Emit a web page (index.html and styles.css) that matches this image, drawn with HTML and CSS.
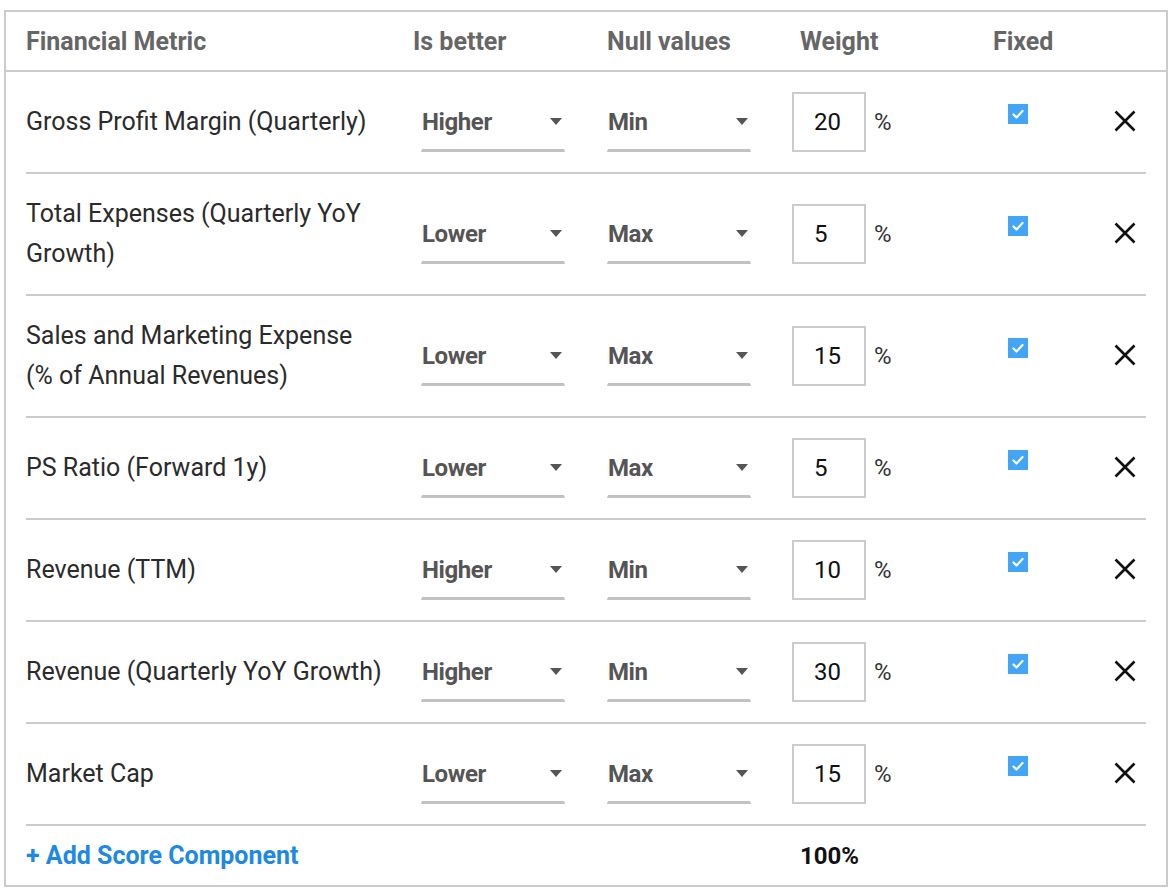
FILE: index.html
```html
<!DOCTYPE html>
<html lang="en">
<head>
<meta charset="utf-8">
<title>Score Components</title>
<link rel="stylesheet" href="styles.css">
</head>
<body>
<div class="panel">
  <div class="head">
    <div>Financial Metric</div>
    <div>Is better</div>
    <div>Null values</div>
    <div>Weight</div>
    <div>Fixed</div>
  </div>

  <div class="row">
    <div class="metric">Gross Profit Margin (Quarterly)</div>
    <div><div class="select"><span>Higher</span><span class="caret"></span></div></div>
    <div><div class="select"><span>Min</span><span class="caret"></span></div></div>
    <div class="weight"><div class="input">20</div><span class="pct">%</span></div>
    <div class="fixed"><span class="check"><svg viewBox="0 0 20 20" width="20" height="20"><path d="M5.5 10.5 L8.5 13.5 L14.5 7" fill="none" stroke="#fff" stroke-width="2.2" stroke-linecap="round" stroke-linejoin="round"/></svg></span></div>
    <div class="remove"><svg viewBox="0 0 22 22" width="22" height="22"><path d="M1.5 1.5 L20.5 20.5 M20.5 1.5 L1.5 20.5" stroke="#111" stroke-width="2.6"/></svg></div>
  </div>

  <div class="row">
    <div class="metric">Total Expenses (Quarterly YoY Growth)</div>
    <div><div class="select"><span>Lower</span><span class="caret"></span></div></div>
    <div><div class="select"><span>Max</span><span class="caret"></span></div></div>
    <div class="weight"><div class="input">5</div><span class="pct">%</span></div>
    <div class="fixed"><span class="check"><svg viewBox="0 0 20 20" width="20" height="20"><path d="M5.5 10.5 L8.5 13.5 L14.5 7" fill="none" stroke="#fff" stroke-width="2.2" stroke-linecap="round" stroke-linejoin="round"/></svg></span></div>
    <div class="remove"><svg viewBox="0 0 22 22" width="22" height="22"><path d="M1.5 1.5 L20.5 20.5 M20.5 1.5 L1.5 20.5" stroke="#111" stroke-width="2.6"/></svg></div>
  </div>

  <div class="row">
    <div class="metric">Sales and Marketing Expense (%&nbsp;of Annual Revenues)</div>
    <div><div class="select"><span>Lower</span><span class="caret"></span></div></div>
    <div><div class="select"><span>Max</span><span class="caret"></span></div></div>
    <div class="weight"><div class="input">15</div><span class="pct">%</span></div>
    <div class="fixed"><span class="check"><svg viewBox="0 0 20 20" width="20" height="20"><path d="M5.5 10.5 L8.5 13.5 L14.5 7" fill="none" stroke="#fff" stroke-width="2.2" stroke-linecap="round" stroke-linejoin="round"/></svg></span></div>
    <div class="remove"><svg viewBox="0 0 22 22" width="22" height="22"><path d="M1.5 1.5 L20.5 20.5 M20.5 1.5 L1.5 20.5" stroke="#111" stroke-width="2.6"/></svg></div>
  </div>

  <div class="row">
    <div class="metric">PS Ratio (Forward 1y)</div>
    <div><div class="select"><span>Lower</span><span class="caret"></span></div></div>
    <div><div class="select"><span>Max</span><span class="caret"></span></div></div>
    <div class="weight"><div class="input">5</div><span class="pct">%</span></div>
    <div class="fixed"><span class="check"><svg viewBox="0 0 20 20" width="20" height="20"><path d="M5.5 10.5 L8.5 13.5 L14.5 7" fill="none" stroke="#fff" stroke-width="2.2" stroke-linecap="round" stroke-linejoin="round"/></svg></span></div>
    <div class="remove"><svg viewBox="0 0 22 22" width="22" height="22"><path d="M1.5 1.5 L20.5 20.5 M20.5 1.5 L1.5 20.5" stroke="#111" stroke-width="2.6"/></svg></div>
  </div>

  <div class="row">
    <div class="metric">Revenue (TTM)</div>
    <div><div class="select"><span>Higher</span><span class="caret"></span></div></div>
    <div><div class="select"><span>Min</span><span class="caret"></span></div></div>
    <div class="weight"><div class="input">10</div><span class="pct">%</span></div>
    <div class="fixed"><span class="check"><svg viewBox="0 0 20 20" width="20" height="20"><path d="M5.5 10.5 L8.5 13.5 L14.5 7" fill="none" stroke="#fff" stroke-width="2.2" stroke-linecap="round" stroke-linejoin="round"/></svg></span></div>
    <div class="remove"><svg viewBox="0 0 22 22" width="22" height="22"><path d="M1.5 1.5 L20.5 20.5 M20.5 1.5 L1.5 20.5" stroke="#111" stroke-width="2.6"/></svg></div>
  </div>

  <div class="row">
    <div class="metric">Revenue (Quarterly YoY Growth)</div>
    <div><div class="select"><span>Higher</span><span class="caret"></span></div></div>
    <div><div class="select"><span>Min</span><span class="caret"></span></div></div>
    <div class="weight"><div class="input">30</div><span class="pct">%</span></div>
    <div class="fixed"><span class="check"><svg viewBox="0 0 20 20" width="20" height="20"><path d="M5.5 10.5 L8.5 13.5 L14.5 7" fill="none" stroke="#fff" stroke-width="2.2" stroke-linecap="round" stroke-linejoin="round"/></svg></span></div>
    <div class="remove"><svg viewBox="0 0 22 22" width="22" height="22"><path d="M1.5 1.5 L20.5 20.5 M20.5 1.5 L1.5 20.5" stroke="#111" stroke-width="2.6"/></svg></div>
  </div>

  <div class="row">
    <div class="metric">Market Cap</div>
    <div><div class="select"><span>Lower</span><span class="caret"></span></div></div>
    <div><div class="select"><span>Max</span><span class="caret"></span></div></div>
    <div class="weight"><div class="input">15</div><span class="pct">%</span></div>
    <div class="fixed"><span class="check"><svg viewBox="0 0 20 20" width="20" height="20"><path d="M5.5 10.5 L8.5 13.5 L14.5 7" fill="none" stroke="#fff" stroke-width="2.2" stroke-linecap="round" stroke-linejoin="round"/></svg></span></div>
    <div class="remove"><svg viewBox="0 0 22 22" width="22" height="22"><path d="M1.5 1.5 L20.5 20.5 M20.5 1.5 L1.5 20.5" stroke="#111" stroke-width="2.6"/></svg></div>
  </div>

  <div class="foot">
    <a class="add" href="#">+ Add Score Component</a>
    <span></span>
    <span></span>
    <span class="total">100%</span>
  </div>
</div>
</body>
</html>
```

FILE: styles.css
```css
* { box-sizing: border-box; }

body {
  margin: 0;
  background: #fff;
  font-family: Roboto, "Liberation Sans", sans-serif;
  font-size: 24px;
  color: #333;
}

.panel {
  margin: 10px 0 0 4px;
  width: 1164px;
  border: 2px solid #cccccc;
}

.head {
  display: grid;
  grid-template-columns: 387px 194px 193px 193px 1fr;
  align-items: center;
  height: 60px;
  padding: 0 20px;
  border-bottom: 2px solid #cccccc;
  font-size: 25px;
  font-weight: 700;
  color: #666;
}

.row {
  display: grid;
  grid-template-columns: 395px 186px 185px 216px 106px 1fr;
  align-items: center;
  margin: 0 20px;
  padding: 20px 0;
  border-bottom: 2px solid #cccccc;
}

.metric {
  width: 365px;
  font-size: 25px;
  line-height: 40px;
  color: #2b2b2b;
}

.select {
  width: 144px;
  height: 60px;
  padding-top: 2px;
  display: flex;
  align-items: center;
  justify-content: space-between;
  border-left: 1px solid transparent;
  border-right: 1px solid transparent;
  border-bottom: 3px solid #c2c2c2;
  font-weight: 700;
  color: #555;
  letter-spacing: -0.4px;
}

.caret {
  width: 0;
  height: 0;
  margin-right: 2px;
  border-left: 6px solid transparent;
  border-right: 6px solid transparent;
  border-top: 7px solid #555;
}

.weight {
  display: flex;
  align-items: center;
}

.input {
  width: 74px;
  height: 60px;
  border: 2px solid #cccccc;
  padding-left: 20px;
  line-height: 56px;
  color: #111;
}

.pct {
  margin-left: 8px;
  color: #333;
}

.fixed {
  display: flex;
  align-self: center;
  margin-bottom: 16px;
}

.check {
  display: block;
  width: 20px;
  height: 20px;
  background: #42a5f5;
}

.check svg { display: block; }

.remove {
  display: flex;
  margin-bottom: 2px;
}

.remove svg { display: block; }

.foot {
  display: grid;
  grid-template-columns: 395px 186px 185px 216px;
  align-items: center;
  height: 59px;
  padding: 0 20px;
  font-size: 25px;
  font-weight: 700;
}

.add {
  color: #1e88e5;
  text-decoration: none;
}

.total {
  padding-left: 8px;
  font-size: 24px;
  color: #111;
}
```
